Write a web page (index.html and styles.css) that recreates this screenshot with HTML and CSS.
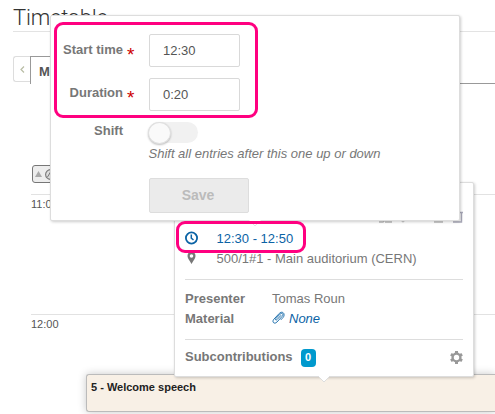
FILE: index.html
```html
<!DOCTYPE html>
<html lang="en">
<head>
<meta charset="utf-8">
<title>Timetable</title>
<link rel="stylesheet" href="styles.css">
</head>
<body>
<main class="page">
  <h1 class="title">Timetable</h1>
  <nav class="tabs">
    <button class="prev" aria-label="Previous"><svg width="5" height="7" viewBox="0 0 5 7"><path d="M4 .5 1 3.500l3 3" fill="none" stroke="#b9bda5" stroke-width="1.200"/></svg></button>
    <div class="tab">Mon</div>
    <div class="tab-line"></div>
  </nav>
  <section class="schedule">
    <div class="poster">
      <svg width="7" height="6" viewBox="0 0 7 6"><path d="M3.500 0 7 6H0z" fill="#aaa"/></svg>
      <svg width="11" height="11" viewBox="0 0 11 11"><circle cx="5.500" cy="5.500" r="4.900" fill="#ddd" stroke="#777" stroke-width="1.100"/><path d="M2.500 8 5.500 3 8 8" fill="none" stroke="#777"/></svg>
    </div>
    <div class="hour">11:00</div>
    <div class="hour">12:00
      <article class="entry">5 - Welcome speech</article>
    </div>
  </section>
</main>

<aside class="details">
  <div class="toolbar">
    <svg width="13" height="12" viewBox="0 0 13 12"><path d="M0 11h4l2-2M6 11h7" fill="none" stroke="#bbb" stroke-width="1.500"/></svg>
    <svg width="6" height="12" viewBox="0 0 6 12"><path d="M1 9l2 2 2-2" fill="none" stroke="#ccc" stroke-width="1.200"/></svg>
    <svg class="gap" width="9" height="12" viewBox="0 0 9 12"><path d="M0 11h9" fill="none" stroke="#bbb" stroke-width="1.500"/></svg>
    <svg width="12" height="12" viewBox="0 0 12 12"><path d="M10.500 1v10H2M9 1.500h3" fill="none" stroke="#aab" stroke-width="1.400"/></svg>
  </div>
  <div class="row when">
    <svg width="14" height="14" viewBox="0 0 14 14"><circle cx="6.500" cy="7" r="5.600" fill="none" stroke="#0b63a5" stroke-width="1.800"/><path d="M6.300 3.500V7.200L8.500 9" fill="none" stroke="#0b63a5" stroke-width="1.500"/></svg>
    <span>12:30 - 12:50</span>
  </div>
  <div class="row where">
    <svg width="14" height="14" viewBox="0 0 14 14"><path fill-rule="evenodd" d="M6.500 1a4 4 0 0 1 4 4c0 2.300-2 4.500-4 8-2-3.500-4-5.700-4-8a4 4 0 0 1 4-4zm0 2.200a1.800 1.800 0 1 0 0 3.600 1.800 1.800 0 0 0 0-3.600z" fill="#777"/></svg>
    <span>500/1#1 - Main auditorium (CERN)</span>
  </div>
  <dl class="facts">
    <dt>Presenter</dt><dd>Tomas Roun</dd>
    <dt>Material</dt>
    <dd class="none"><svg width="13" height="14" viewBox="0 0 13 14"><path d="M9.200 4.200 4.900 8.700c-.9 1-2-.1-1.100-1.100L8 3.200c2-1.900 4.100.1 2.200 2.100l-5.300 5.800C2.200 13.700-.5 10.800 1.900 8.200l5.400-5.800C9 .4 12.600.9 12 4.700c-.2 1.300-1.500 2.400-3.200 4.200" fill="none" stroke="#0b63a5" stroke-width=".9"/></svg><span>None</span></dd>
  </dl>
  <div class="subs">
    <strong>Subcontributions</strong><span class="count">0</span>
    <svg class="gear" width="13" height="13" viewBox="0 0 13 13"><circle cx="6.500" cy="6.500" r="3.900" fill="none" stroke="#999" stroke-width="2.400"/><path d="M6.500 0v2.500M6.500 10.500V13M.9 3.250l2.100 1.250M10 8.500l2.100 1.250M.9 9.750 3 8.500M10 4.500l2.100-1.250" stroke="#999" stroke-width="3"/></svg>
  </div>
  <svg class="tail" width="14" height="8" viewBox="0 0 14 8"><path d="M0 0h14L7 7z" fill="#fff"/><path d="M1 1l6 6 6-6" fill="none" stroke="#ddd"/></svg>
</aside>

<form class="editor">
  <label class="required" for="start">Start time</label>
  <input id="start" value="12:30">
  <label class="required second" for="duration">Duration</label>
  <input class="second" id="duration" value="0:20">
  <label class="shift">Shift</label>
  <div class="shift-field"><div class="switch"></div><p>Shift all entries after this one up or down</p></div>
  <button class="save" type="button" disabled>Save</button>
  <svg class="tail" width="14" height="8" viewBox="0 0 14 8"><path d="M0 0h14L7 7z" fill="#fff"/><path d="M4 4l3 3 3-3" fill="none" stroke="#e4e4e4"/></svg>
</form>
<div class="mark mark-fields"></div>
<div class="mark mark-time"></div>
</body>
</html>
```
FILE: styles.css
```css
* { box-sizing: border-box; }
body {
  margin: 0;
  width: 495px;
  height: 414px;
  overflow: hidden;
  position: relative;
  background: #fff;
  color: #777;
  font: 13px/20px "Liberation Sans", Arial, sans-serif;
}
svg { display: block; flex: none; }
.page { height: 414px; padding-left: 13px; }
.title {
  margin: 0;
  height: 32px;
  padding-top: 5px;
  border-bottom: 1px solid #e3e3e3;
  color: #333;
  font: 300 22px/25px Roboto, sans-serif;
  letter-spacing: -.2px;
}
.tabs { display: flex; height: 52px; padding-top: 24px; }
.prev {
  display: flex;
  align-items: center;
  justify-content: center;
  width: 17px;
  height: 26px;
  padding: 0;
  border: 1px solid #ddd;
  border-right: 0;
  border-radius: 3px 0 0 3px;
  background: #fff;
}
.tab {
  width: 60px;
  height: 28px;
  padding: 5px 8px;
  border: 1px solid #999;
  border-bottom: 0;
  color: #555;
  font-weight: bold;
}
.tab-line { flex: 1; border-bottom: 1px solid #999; }
.schedule { padding: 81px 0 0 18px; }
.poster {
  display: flex;
  align-items: center;
  gap: 3px;
  width: 200px;
  height: 18px;
  margin: 0 0 11px 1px;
  padding-left: 2px;
  border: 1px solid #777;
  border-radius: 3px;
  background: #ededed;
}
.hour {
  height: 120px;
  border-top: 1px solid #e2e2e2;
  color: #555;
  font-size: 11px;
  line-height: 19px;
}
.entry {
  height: 38px;
  margin: 40px 0 0 55px;
  padding: 3px 4px;
  border: 1px solid #bbb;
  border-right: 0;
  border-radius: 3px 0 0 3px;
  background: #f8f0e6;
  box-shadow: 0 0 8px rgba(0, 0, 0, .22);
  color: #222;
  font-weight: bold;
}
.details, .editor {
  position: absolute;
  background: #fff;
  border: 1px solid #ddd;
  border-radius: 2px;
  box-shadow: 1px 1px 3px rgba(0, 0, 0, .2);
}
.details {
  left: 174px;
  top: 182px;
  width: 300px;
  height: 195px;
  padding: 28px 10px 0;
}
.toolbar { display: flex; justify-content: flex-end; gap: 8px; height: 18px; }
.toolbar .gap { margin-left: 20px; }
.row { display: flex; align-items: center; gap: 18px; height: 20px; }
.row svg { margin-bottom: 2px; }
.row span { margin-left: -.5px; }
.when { color: #0b63a5; }
.facts {
  display: grid;
  grid-template-columns: 87px 1fr;
  margin: 10px 0 0;
  padding: 9px 0 10px;
  border: solid #ddd;
  border-width: 1px 0;
}
.facts dt { font-weight: bold; }
.facts dd { margin: 0; }
.facts .none { display: flex; align-items: center; gap: 4px; color: #0b63a5; font-style: italic; }
.facts .none svg { margin-bottom: 2px; }
.subs { display: flex; align-items: center; height: 35px; }
.subs strong { margin-bottom: 1px; }
.count {
  width: 15px;
  height: 18px;
  margin-left: 8px;
  border-radius: 4px;
  background: #0099cd;
  color: #fff;
  font: bold 11px/17px "Liberation Sans", Arial, sans-serif;
  text-align: center;
}
.gear { margin-left: auto; }
.tail { position: absolute; left: 142px; bottom: -7px; }
.editor {
  left: 50px;
  top: 15px;
  width: 410px;
  height: 206px;
  padding: 18px 10px 0 11px;
  display: grid;
  grid-template-columns: 61px 1fr;
  grid-template-rows: 33px 44px 51px 51px;
  column-gap: 26px;
  align-content: start;
}
.editor label { text-align: right; font-weight: bold; line-height: 32px; white-space: nowrap; }
.required { position: relative; }
.required::after {
  content: "*";
  position: absolute;
  left: 65px;
  top: 5px;
  color: #c00;
  font-size: 19px;
  font-weight: normal;
}
.editor input {
  width: 91px;
  height: 33px;
  padding: 0 13px 1px;
  border: 1px solid #d9d9d9;
  border-radius: 2px;
  background: #fff;
  color: #555;
  font: 13px "Liberation Sans", Arial, sans-serif;
}
.editor .second { margin-top: 11px; }
.editor label.second { margin-top: 10px; }
.editor .shift { line-height: 39px; }
.shift-field { padding-top: 11px; }
.switch { width: 50px; height: 21px; margin-left: -1px; border-radius: 11px; background: #f1f1f1; }
.switch::before {
  content: "";
  display: block;
  width: 21px;
  height: 20px;
  border: 1px solid #e0e0e0;
  border-radius: 50%;
  background: #fafafa;
  box-shadow: 0 1px 2px rgba(0, 0, 0, .25);
}
.shift-field p { margin: 1px 0 0 -.5px; line-height: 20px; font-style: italic; }
.save {
  grid-column: 2;
  width: 100px;
  height: 35px;
  margin-top: 16px;
  padding: 0 2px 2px 0;
  border: 1px solid #ddd;
  border-radius: 2px;
  background: #ebebeb;
  color: #bbb;
  font: bold 14px "Liberation Sans", Arial, sans-serif;
}
.editor .tail { left: 197px; }
.mark { position: absolute; border: 3px solid #ff0080; border-radius: 9px; }
.mark-fields { left: 54px; top: 22px; width: 204px; height: 96px; }
.mark-time { left: 176px; top: 221px; width: 130px; height: 32px; }
```
